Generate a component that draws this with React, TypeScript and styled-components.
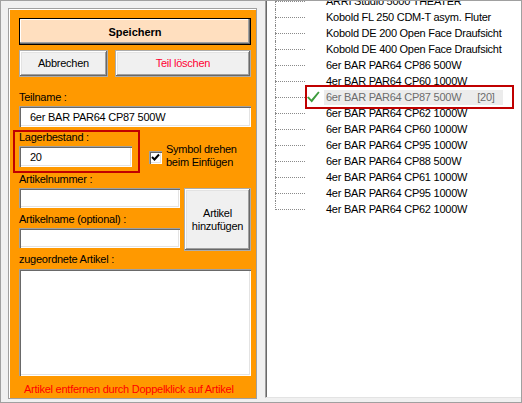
import React from "react";
import styled, { createGlobalStyle } from "styled-components";

const Global = createGlobalStyle`
  html, body { margin: 0; padding: 0; background: #f0f0f0; }
  body { font-family: "Liberation Sans", Arial, sans-serif; font-size: 11px; }
`;

const Window = styled.div`
  width: 522px;
  height: 403px;
  box-sizing: border-box;
  border: 1px solid #a0a0a0;
  background: #f0f0f0;
  display: flex;
  align-items: flex-start;
  overflow: hidden;
  font-family: "Liberation Sans", Arial, sans-serif;
  font-size: 11px;
  letter-spacing: -0.25px;
  color: #000;
`;

const Frame = styled.div`
  box-sizing: border-box;
  flex: none;
  width: 249px;
  height: 391px;
  margin: 7px 0 0 7px;
  border: 1px solid #a0a0a0;
  box-shadow: inset 1px 1px 0 #fff;
  background: #ff9900;
  padding: 9px 5px 0 10px;
  display: flex;
  flex-direction: column;
`;

const raised = `
  box-shadow: inset -1px -1px 0 #696969, inset 1px 1px 0 #fff,
    inset -2px -2px 0 #a0a0a0, inset 2px 2px 0 #e3e3e3;
`;

const SaveButton = styled.div`
  box-sizing: border-box;
  height: 27px;
  border: 1px solid #000;
  background: #ffdfbf;
  box-shadow: inset -1px -1px 0 #696969, inset -2px -2px 0 #a0a0a0, inset 1px 1px 0 #fff;
  display: flex;
  align-items: center;
  justify-content: center;
  font-weight: bold;
  letter-spacing: 0;
`;

const ButtonRow = styled.div`
  display: flex;
  gap: 7px;
  margin-top: 5px;
`;

const Button = styled.div<{ $w: number; $h?: number; $danger?: boolean }>`
  box-sizing: border-box;
  width: ${(p) => p.$w}px;
  height: ${(p) => p.$h ?? 27}px;
  background: #f0f0f0;
  border: 1px solid #acacac;
  ${raised}
  color: ${(p) => (p.$danger ? "#ff0033" : "#000")};
  display: flex;
  align-items: center;
  justify-content: center;
  text-align: center;
  line-height: 13px;
`;

const Label = styled.div<{ $mt: number }>`
  height: 14px;
  line-height: 14px;
  margin-top: ${(p) => p.$mt}px;
  white-space: nowrap;
`;

const Input = styled.div<{ $w?: number; $h?: number }>`
  box-sizing: border-box;
  width: ${(p) => (p.$w ? `${p.$w}px` : "100%")};
  height: ${(p) => p.$h ?? 21}px;
  margin-top: 2px;
  background: #fff;
  box-shadow: inset 1px 1px 0 #a0a0a0, inset 2px 2px 0 #696969,
    inset -1px -1px 0 #fff, inset -2px -2px 0 #e3e3e3;
  padding: 0 0 0 11px;
  display: flex;
  align-items: center;
  white-space: nowrap;
`;

const StockRow = styled.div`
  display: flex;
  margin-top: 3px;
`;

const Field = styled.div`
  position: relative;
  display: flex;
  flex-direction: column;
`;

const Highlight = styled.div<{ $l: number; $t: number; $w: number; $h: number }>`
  position: absolute;
  left: ${(p) => p.$l}px;
  top: ${(p) => p.$t}px;
  width: ${(p) => p.$w}px;
  height: ${(p) => p.$h}px;
  box-sizing: border-box;
  border: 2px solid #c00000;
  pointer-events: none;
`;

const Option = styled.div`
  display: flex;
  align-items: flex-start;
  margin: 13px 0 0 17px;
  gap: 4px;
`;

const CheckBox = styled.div`
  box-sizing: border-box;
  flex: none;
  width: 13px;
  height: 13px;
  margin-top: 8px;
  background: #fff;
  box-shadow: inset 1px 1px 0 #a0a0a0, inset 2px 2px 0 #696969,
    inset -1px -1px 0 #fff, inset -2px -2px 0 #e3e3e3;
  display: flex;
  align-items: center;
  justify-content: center;
`;

const OptionText = styled.div`
  line-height: 13px;
`;

const ArticleGrid = styled.div`
  display: flex;
  justify-content: space-between;
  align-items: flex-start;
  margin-top: 2px;
`;

const ArticleFields = styled.div`
  display: flex;
  flex-direction: column;
  width: 161px;
`;

const ListBox = styled.div`
  box-sizing: border-box;
  height: 107px;
  margin-top: 3px;
  background: #fff;
  box-shadow: inset 1px 1px 0 #a0a0a0, inset 2px 2px 0 #696969,
    inset -1px -1px 0 #fff, inset -2px -2px 0 #e3e3e3;
`;

const Note = styled.div`
  margin-top: 6px;
  height: 14px;
  line-height: 14px;
  padding-left: 5px;
  color: #ff0000;
  white-space: nowrap;
`;

const Tree = styled.div`
  box-sizing: border-box;
  flex: none;
  width: 256px;
  height: 397px;
  margin-left: 8px;
  background: #fff;
  border-left: 1px solid #a0a0a0;
  border-bottom: 1px solid #e3e3e3;
  box-shadow: inset 1px 0 0 #696969;
  overflow: hidden;
  padding-left: 9px;
`;

const TreeList = styled.div`
  margin-top: -8px;
  display: flex;
  flex-direction: column;
`;

const Row = styled.div`
  position: relative;
  display: flex;
  align-items: center;
  height: 16px;
`;

const Branch = styled.span<{ $last?: boolean }>`
  position: relative;
  flex: none;
  align-self: stretch;
  width: 30px;
  &::before {
    content: "";
    position: absolute;
    left: 0;
    top: 0;
    height: ${(p) => (p.$last ? "9px" : "16px")};
    border-left: 1px dotted #8a8a8a;
  }
  &::after {
    content: "";
    position: absolute;
    left: 0;
    top: 8px;
    width: 30px;
    border-top: 1px dotted #8a8a8a;
  }
`;

const IconSlot = styled.span`
  flex: none;
  width: 16px;
  height: 16px;
  display: flex;
  align-items: center;
  justify-content: center;
`;

const ItemLabel = styled.span<{ $selected?: boolean }>`
  margin-left: 3px;
  padding: 0 ${(p) => (p.$selected ? "8px" : "2px")} 0 2px;
  height: 15px;
  line-height: 15px;
  white-space: pre;
  background: ${(p) => (p.$selected ? "#ececec" : "transparent")};
  color: ${(p) => (p.$selected ? "#6d6d6d" : "#000")};
`;

const Count = styled.span`
  margin-left: 16px;
`;

const items = [
  "ARRI Studio 5000 THEATER",
  "Kobold FL 250 CDM-T asym. Fluter",
  "Kobold DE 200 Open Face Draufsicht",
  "Kobold DE 400 Open Face Draufsicht",
  "6er BAR PAR64 CP86 500W",
  "4er BAR PAR64 CP60 1000W",
  "6er BAR PAR64 CP87 500W",
  "6er BAR PAR64 CP62 1000W",
  "6er BAR PAR64 CP60 1000W",
  "6er BAR PAR64 CP95 1000W",
  "6er BAR PAR64 CP88 500W",
  "4er BAR PAR64 CP61 1000W",
  "4er BAR PAR64 CP95 1000W",
  "4er BAR PAR64 CP62 1000W",
];
const selectedIndex = 6;

const GreenCheck = () => (
  <svg width="16" height="16" viewBox="0 0 16 16">
    <path d="M2 8.6 L3.6 7.4 L6.4 10.4 L13.2 2.6 L14.6 3.6 L6.8 13.6 Z" fill="#3d9c3d" />
  </svg>
);

const BlackCheck = () => (
  <svg width="9" height="9" viewBox="0 0 9 9">
    <path d="M1 4 L3.5 6.5 L8 1.5" stroke="#000" strokeWidth="2" fill="none" />
  </svg>
);

export default function App() {
  return (
    <>
      <Global />
      <Window>
        <Frame>
          <SaveButton>Speichern</SaveButton>
          <ButtonRow>
            <Button $w={89}>Abbrechen</Button>
            <Button $w={136} $danger>
              Teil löschen
            </Button>
          </ButtonRow>
          <Label $mt={13}>Teilname :</Label>
          <Input>6er BAR PAR64 CP87 500W</Input>
          <StockRow>
            <Field>
              <Label $mt={0}>Lagerbestand :</Label>
              <Input $w={113}>20</Input>
              <Highlight $l={-6} $t={0} $w={127} $h={43} />
            </Field>
            <Option>
              <CheckBox>
                <BlackCheck />
              </CheckBox>
              <OptionText>
                Symbol drehen
                <br />
                beim Einfügen
              </OptionText>
            </Option>
          </StockRow>
          <Label $mt={3}>Artikelnummer :</Label>
          <ArticleGrid>
            <ArticleFields>
              <Input $h={20} style={{ marginTop: 0 }} />
              <Label $mt={4}>Artikelname (optional) :</Label>
              <Input $h={20} />
            </ArticleFields>
            <Button $w={67} $h={63}>
              Artikel
              <br />
              hinzufügen
            </Button>
          </ArticleGrid>
          <Label $mt={1}>zugeordnete Artikel :</Label>
          <ListBox />
          <Note>Artikel entfernen durch Doppelklick auf Artikel</Note>
        </Frame>
        <Tree>
          <TreeList>
            {items.map((name, i) => {
              const sel = i === selectedIndex;
              return (
                <Row key={i}>
                  <Branch $last={i === items.length - 1} />
                  <IconSlot>{sel && <GreenCheck />}</IconSlot>
                  <ItemLabel $selected={sel}>
                    {name}
                    {sel && <Count>[20]</Count>}
                  </ItemLabel>
                  {sel && <Highlight $l={30} $t={-4} $w={209} $h={24} />}
                </Row>
              );
            })}
          </TreeList>
        </Tree>
      </Window>
    </>
  );
}
